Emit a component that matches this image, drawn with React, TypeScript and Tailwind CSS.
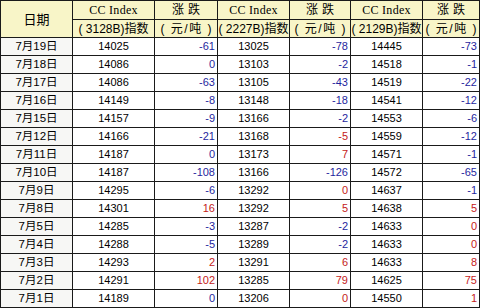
import React from "react";

const rows: { d: string; v: [string, string, string, string, string, string]; c: [string, string, string] }[] = [
  { d: "7月19日", v: ["14025", "-61", "13025", "-78", "14445", "-73"], c: ["b", "b", "b"] },
  { d: "7月18日", v: ["14086", "0", "13103", "-2", "14518", "-1"], c: ["b", "b", "b"] },
  { d: "7月17日", v: ["14086", "-63", "13105", "-43", "14519", "-22"], c: ["b", "b", "b"] },
  { d: "7月16日", v: ["14149", "-8", "13148", "-18", "14541", "-12"], c: ["b", "b", "b"] },
  { d: "7月15日", v: ["14157", "-9", "13166", "-2", "14553", "-6"], c: ["b", "b", "b"] },
  { d: "7月12日", v: ["14166", "-21", "13168", "-5", "14559", "-12"], c: ["b", "r", "b"] },
  { d: "7月11日", v: ["14187", "0", "13173", "7", "14571", "-1"], c: ["b", "r", "b"] },
  { d: "7月10日", v: ["14187", "-108", "13166", "-126", "14572", "-65"], c: ["b", "b", "b"] },
  { d: "7月9日", v: ["14295", "-6", "13292", "0", "14637", "-1"], c: ["b", "r", "b"] },
  { d: "7月8日", v: ["14301", "16", "13292", "5", "14638", "5"], c: ["r", "r", "r"] },
  { d: "7月5日", v: ["14285", "-3", "13287", "-2", "14633", "0"], c: ["b", "b", "r"] },
  { d: "7月4日", v: ["14288", "-5", "13289", "-2", "14633", "0"], c: ["b", "b", "r"] },
  { d: "7月3日", v: ["14293", "2", "13291", "6", "14633", "8"], c: ["r", "r", "r"] },
  { d: "7月2日", v: ["14291", "102", "13285", "79", "14625", "75"], c: ["r", "r", "r"] },
  { d: "7月1日", v: ["14189", "0", "13206", "0", "14550", "1"], c: ["b", "r", "r"] },
];

const hdr = "bg-[#f8f5c8] flex items-center justify-center text-black whitespace-nowrap overflow-hidden";

function Mono() {
  return (
    <div className={hdr + " font-['Liberation_Serif',serif] text-[12px] tracking-[0.3px]"}>
      CC Index
    </div>
  );
}

function Zd() {
  return <div className={hdr + " text-[12px] tracking-[4px] pl-[4px]"}>涨跌</div>;
}

function Unit() {
  return <div className={hdr + " text-[12px] tracking-[1.5px] pl-[1.5px]"}>( 元/吨 )</div>;
}

function Code({ t }: { t: string }) {
  return <div className={hdr + " text-[12px]"}>{"( " + t + ")指数"}</div>;
}

function Chg({ v, c }: { v: string; c: string }) {
  return (
    <div
      className={
        "bg-white flex items-center justify-end pr-[2px] text-[11px] " +
        (c === "r" ? "text-[#c41a1a]" : "text-[#1f1f9e]")
      }
    >
      {v}
    </div>
  );
}

function Idx({ v }: { v: string }) {
  return <div className="bg-white flex items-center justify-center text-[11px] text-black">{v}</div>;
}

export default function App() {
  return (
    <div className="w-[483px] h-[308px] bg-white">
      <div
        className="grid w-[480px] gap-px bg-[#1a1a1a] p-px font-['Liberation_Sans','Noto_Sans_CJK_SC',sans-serif] leading-none"
        style={{
          gridTemplateColumns: "71px 81px 62px 71px 60px 71px 56px",
          gridTemplateRows: "18px 17px repeat(15, 17px)",
        }}
      >
        <div className={hdr + " row-span-2 text-[13px]"}>日期</div>
        <Mono />
        <Zd />
        <Mono />
        <Zd />
        <Mono />
        <Zd />

        <Code t="3128B" />
        <Unit />
        <Code t="2227B" />
        <Unit />
        <Code t="2129B" />
        <Unit />

        {rows.map((r) => (
          <React.Fragment key={r.d}>
            <div className="bg-[#f7f7f5] flex items-center justify-center text-[11.5px] text-black">{r.d}</div>
            <Idx v={r.v[0]} />
            <Chg v={r.v[1]} c={r.c[0]} />
            <Idx v={r.v[2]} />
            <Chg v={r.v[3]} c={r.c[1]} />
            <Idx v={r.v[4]} />
            <Chg v={r.v[5]} c={r.c[2]} />
          </React.Fragment>
        ))}
      </div>
    </div>
  );
}
